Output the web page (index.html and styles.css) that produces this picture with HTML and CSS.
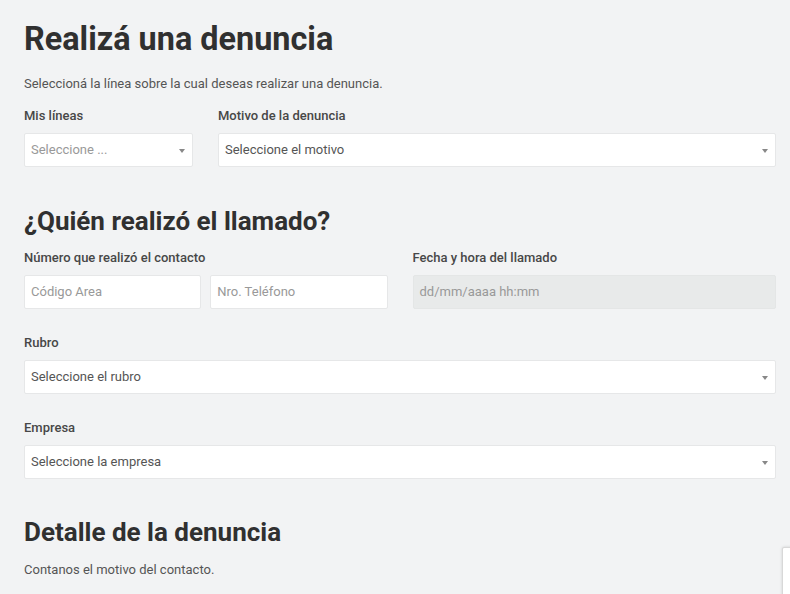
FILE: index.html
```html
<!DOCTYPE html>
<html lang="es">
<head>
<meta charset="utf-8">
<link rel="stylesheet" href="styles.css">
</head>
<body>
<main class="page">
  <h1 class="title">Realizá una denuncia</h1>
  <p class="lead">Seleccioná la línea sobre la cual deseas realizar una denuncia.</p>
  <div class="row row-lines">
    <div class="field">
      <label class="label">Mis líneas</label>
      <div class="select placeholder">Seleccione ...<span class="caret"></span></div>
    </div>
    <div class="field">
      <label class="label">Motivo de la denuncia</label>
      <div class="select">Seleccione el motivo<span class="caret"></span></div>
    </div>
  </div>

  <h2 class="section">¿Quién realizó el llamado?</h2>
  <div class="row row-halves">
    <div class="field">
      <label class="label">Número que realizó el contacto</label>
      <div class="pair">
        <div class="input placeholder">Código Area</div>
        <div class="input placeholder">Nro. Teléfono</div>
      </div>
    </div>
    <div class="field">
      <label class="label">Fecha y hora del llamado</label>
      <div class="input disabled placeholder">dd/mm/aaaa hh:mm</div>
    </div>
  </div>

  <div class="field block">
    <label class="label">Rubro</label>
    <div class="select">Seleccione el rubro<span class="caret"></span></div>
  </div>
  <div class="field block">
    <label class="label">Empresa</label>
    <div class="select">Seleccione la empresa<span class="caret"></span></div>
  </div>

  <h2 class="section section-detail">Detalle de la denuncia</h2>
  <p class="lead">Contanos el motivo del contacto.</p>
</main>
<div class="badge"></div>
</body>
</html>
```
FILE: styles.css
```css
* { box-sizing: border-box; }
html, body { margin: 0; padding: 0; }
body {
  background: #f2f3f4;
  font-family: Roboto, "Noto Sans", Arial, sans-serif;
  color: #333;
  overflow: hidden;
  height: 594px;
}
.page {
  padding: 16px 14px 0 24px;
  width: 790px;
}
.title {
  margin: 0;
  font-size: 32.4px;
  font-weight: 700;
  line-height: 46px;
  color: #303030;
}
.lead {
  margin: 14px 0 0;
  font-size: 13px;
  line-height: 16px;
  color: #555;
}
.row { display: grid; }
.row-lines {
  grid-template-columns: 169px 1fr;
  column-gap: 25px;
  margin-top: 16px;
}
.row-halves {
  grid-template-columns: 1fr 1fr;
  column-gap: 25px;
  margin-top: 13px;
}
.field { display: flex; flex-direction: column; }
.label {
  font-size: 13px;
  font-weight: 500;
  line-height: 16px;
  color: #474747;
  margin-bottom: 9px;
}
.select, .input {
  position: relative;
  height: 34px;
  background: #fff;
  border: 1px solid #e6e7e8;
  border-radius: 2px;
  font-size: 13px;
  line-height: 32px;
  padding: 0 6px;
  color: #555;
}
.placeholder { color: #999; }
.input.disabled { background: #e8eaea; border-color: #e4e6e6; }
.caret {
  position: absolute;
  right: 7px;
  top: 15px;
  width: 0;
  height: 0;
  border-left: 3px solid transparent;
  border-right: 3px solid transparent;
  border-top: 4px solid #888;
}
.pair {
  display: grid;
  grid-template-columns: 1fr 1fr;
  column-gap: 9px;
}
.section {
  margin: 38px 0 0;
  font-size: 26px;
  font-weight: 700;
  line-height: 32px;
  color: #303030;
}
.block { margin-top: 26px; }
.section-detail { margin-top: 37px; }
.badge {
  position: absolute;
  left: 782px;
  top: 547px;
  width: 40px;
  height: 60px;
  background: #fff;
  border: 1px solid #d8d8d8;
  border-radius: 2px;
  box-shadow: 0 0 3px rgba(0,0,0,0.15);
}
```
